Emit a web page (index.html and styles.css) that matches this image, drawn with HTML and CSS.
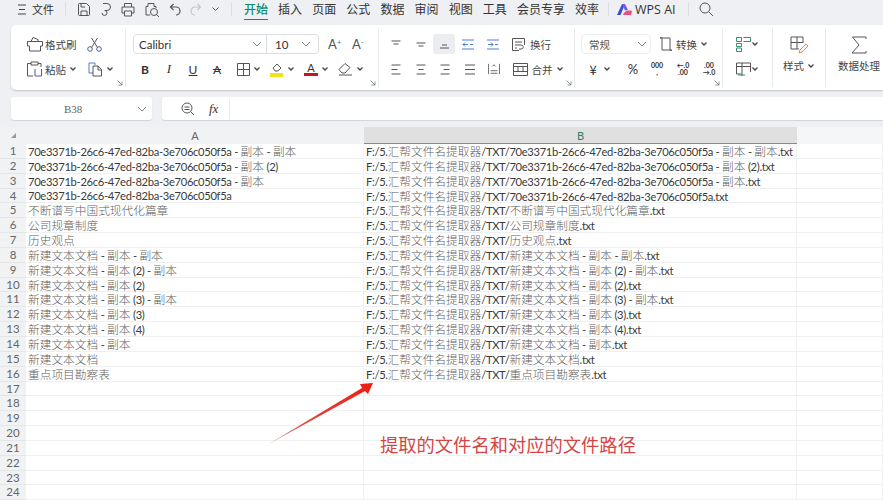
FILE: index.html
```html
<!DOCTYPE html>
<html lang="zh-CN">
<head>
  <meta charset="UTF-8" />
  <title>WPS 表格</title>
  <link rel="stylesheet" href="styles.css">
</head>
<body>
  <svg class="defs" width="0" height="0">
    <symbol id="caret" viewBox="0 0 8 8"><path d="M1.500 2.500 4 5l2.500-2.500" fill="none" stroke="#444" stroke-width="1.300"/></symbol>
    <symbol id="chev" viewBox="0 0 10 8"><path d="M1 2l4 4 4-4" fill="none" stroke="#888" stroke-width="1"/></symbol>
    <symbol id="launch" viewBox="0 0 6 6"><path d="M0.500 0.500 5 5M5 1.500V5H1.500" fill="none" stroke="#777" stroke-width=".8"/></symbol>
  </svg>

  <div class="titlebar">
    <svg class="menu-ic" width="8" height="11" viewBox="0 0 8 11"><path d="M0 1h8M1 5.500h6M0 10h8" stroke="#444" fill="none"/></svg>
    <span class="file-tab">文件</span>
    <span class="bar-sep"></span>
    <div class="quick">
      <svg width="14" height="15" viewBox="0 0 14 15"><path d="M1.500 2.500a1 1 0 0 1 1-1h7l3 3v8a1 1 0 0 1-1 1h-9a1 1 0 0 1-1-1zM4 13.500V9h6v4.500M4 1.500V5h4" fill="none" stroke="#555"/></svg>
      <svg width="12" height="15" viewBox="0 0 12 15"><path d="M3 1.500h4a3.500 3.500 0 0 1 0 7H4.500M5 8.500a2.500 2.500 0 1 1-3 2.500" fill="none" stroke="#555"/></svg>
      <svg width="14" height="15" viewBox="0 0 14 15"><path d="M3.500 5V1.500h7V5M1 5h12v6h-2.500M3.500 11H1V5M3.500 9h7v5h-7z" fill="none" stroke="#555"/></svg>
      <svg width="16" height="15" viewBox="0 0 16 15"><path d="M6 13H2V4.500h2V1.500h6V4.500h2V6" fill="none" stroke="#555"/><circle cx="10" cy="10" r="3.500" fill="none" stroke="#555"/><path d="M12.500 12.500 15 15" stroke="#555"/></svg>
      <svg width="12" height="13" viewBox="0 0 12 13"><path d="M4.500 1 1.500 4l3 3M1.500 4H7a3.500 3.500 0 0 1 0 8" fill="none" stroke="#555" stroke-width="1.200"/></svg>
      <svg width="12" height="13" viewBox="0 0 12 13"><path d="M7.500 1l3 3-3 3M10.500 4H5a3.500 3.500 0 0 0 0 8" fill="none" stroke="#c4c6c9" stroke-width="1.200"/></svg>
      <svg width="9" height="8" viewBox="0 0 8 8"><path d="M1 2.500 4 5.500l3-3" fill="none" stroke="#555"/></svg>
    </div>
    <span class="bar-sep tabs-sep"></span>
    <nav class="tabs">
      <a class="active">开始</a>
      <a>插入</a>
      <a>页面</a>
      <a>公式</a>
      <a>数据</a>
      <a>审阅</a>
      <a>视图</a>
      <a>工具</a>
      <a>会员专享</a>
      <a>效率</a>
    </nav>
    <span class="bar-sep ai-sep"></span>
    <div class="wps-ai">
      <svg width="15" height="12" viewBox="0 0 15 12"><path d="M0 12 5 1h3L3.500 12z" fill="#3a4fd8"/><path d="M5 1h3l3 6-3 .5z" fill="#7c5be0"/><path d="M6 12c1-3 4-5.500 9-4l-1 4z" fill="#ef4e7d"/></svg>
      <span>WPS AI</span>
    </div>
    <span class="bar-sep ai-sep2"></span>
    <svg class="search-ic" width="15" height="15" viewBox="0 0 15 15"><circle cx="6" cy="6" r="5" fill="none" stroke="#555"/><path d="M9.500 9.500 14 14" stroke="#555"/></svg>
  </div>

  <div class="ribbon">
    <section class="group g-clip">
      <div class="rib-row">
        <svg class="ic18" width="18" height="16" viewBox="0 0 18 16"><path d="M1.500 5.500h15V10h-2v5h-11v-5h-2zM5 5.500 7 1.500l5 2M12 5.500V3.500" fill="none" stroke="#555"/></svg>
        <span class="lbl">格式刷</span>
        <svg class="scissor" width="15" height="15" viewBox="0 0 15 15"><circle cx="3" cy="12" r="2.300" fill="none" stroke="#4a5f9d"/><circle cx="12" cy="12" r="2.300" fill="none" stroke="#4a5f9d"/><path d="M4.500 10.500 10.500 1M10.500 10.500 4.500 1" fill="none" stroke="#555"/></svg>
      </div>
      <div class="rib-row">
        <svg class="ic18" width="18" height="16" viewBox="0 0 18 16"><path d="M5 2.500H1.500V15H7M12 2.500h3V6M5 1h7v3H5z" fill="none" stroke="#555"/><path d="M9 8v7h6.500V8" fill="none" stroke="#4a5f9d"/></svg>
        <span class="lbl">粘贴</span>
        <svg class="caret" width="8" height="8"><use href="#caret"/></svg>
        <svg class="copy-ic" width="15" height="15" viewBox="0 0 15 15"><path d="M5 11H1V1h6v2" fill="none" stroke="#4a7fd0"/><path d="M5 4h5l3.500 3.500V14H5zM10 4v4h3.500" fill="none" stroke="#555"/></svg>
        <svg class="caret" width="8" height="8"><use href="#caret"/></svg>
      </div>
      <svg class="launcher" width="6" height="6"><use href="#launch"/></svg>
    </section>

    <section class="group g-font">
      <div class="rib-row">
        <div class="font-box">
          <span class="font-name">Calibri</span>
          <svg width="10" height="8"><use href="#chev"/></svg>
          <span class="font-size">10</span>
          <svg width="10" height="8"><use href="#chev"/></svg>
        </div>
        <span class="grow-a">A<sup>+</sup></span>
        <span class="grow-a">A<sup>-</sup></span>
      </div>
      <div class="rib-row fmt-row">
        <b class="fmt">B</b>
        <i class="fmt serif">I</i>
        <u class="fmt">U</u>
        <s class="fmt">A</s>
        <svg class="border-ic" width="13" height="13" viewBox="0 0 13 13"><path d="M.5.500h12v12H.500zM6.500.500v12M.5 6.500h12" fill="none" stroke="#555"/></svg>
        <svg class="caret" width="8" height="8"><use href="#caret"/></svg>
        <svg class="fill-ic" width="14" height="15" viewBox="0 0 14 15"><path d="M3 6l4-4 4 4-3 3H5z" fill="none" stroke="#555"/><rect y="11" width="13" height="4" fill="#f2e21a"/></svg>
        <svg class="caret" width="8" height="8"><use href="#caret"/></svg>
        <span class="color-a">A</span>
        <svg class="caret" width="8" height="8"><use href="#caret"/></svg>
        <svg class="erase-ic" width="15" height="14" viewBox="0 0 15 14"><path d="M1 7.500 7 1.500l5 4-5 5.500H4zM1 13h13" fill="none" stroke="#555"/></svg>
        <svg class="caret" width="8" height="8"><use href="#caret"/></svg>
      </div>
      <svg class="launcher" width="6" height="6"><use href="#launch"/></svg>
    </section>

    <section class="group g-align">
      <div class="rib-row">
        <svg class="al" width="11" height="11" viewBox="0 0 11 11"><path d="M1 2h9M3 5h5" stroke="#555" fill="none"/></svg>
        <svg class="al" width="11" height="11" viewBox="0 0 11 11"><path d="M1 4h9M3 7h5" stroke="#555" fill="none"/></svg>
        <span class="al-on"><svg width="11" height="11" viewBox="0 0 11 11"><path d="M3 6h5M1 9h9" stroke="#555" fill="none"/></svg></span>
        <svg class="al" width="12" height="11" viewBox="0 0 12 11"><path d="M0 1h12M0 10h12M6 5.500H1M3 3.500l-2 2 2 2M8 5.500h3" stroke="#4a7fd0" fill="none"/></svg>
        <svg class="al" width="12" height="11" viewBox="0 0 12 11"><path d="M0 1h12M0 10h12M1 5.500h5M4 3.500l2 2-2 2M8 5.500h3" stroke="#4a7fd0" fill="none"/></svg>
        <svg class="wrap-ic" width="15" height="15" viewBox="0 0 15 15"><path d="M13.500 8V1.500h-12v12H8M4 5h7M4 8h6c3 0 3 4 0 4H8M4 11h2" fill="none" stroke="#555"/></svg>
        <span class="lbl">换行</span>
      </div>
      <div class="rib-row">
        <svg class="al" width="11" height="11" viewBox="0 0 11 11"><path d="M1 1h9M1 5.500h6M1 10h9" stroke="#555" fill="none"/></svg>
        <svg class="al" width="11" height="11" viewBox="0 0 11 11"><path d="M1 1h9M3 5.500h5M1 10h9" stroke="#555" fill="none"/></svg>
        <svg class="al" width="11" height="11" viewBox="0 0 11 11"><path d="M1 1h9M4 5.500h6M1 10h9" stroke="#555" fill="none"/></svg>
        <svg class="al" width="12" height="11" viewBox="0 0 12 11"><path d="M1 1h10M1 5.500h10M1 10h10" stroke="#555" fill="none"/></svg>
        <svg class="al" width="12" height="12" viewBox="0 0 14 12"><path d="M.5 0v12M13.500 0v12M3 11h8M3 8h8M5 3l2-2 2 2" stroke="#555" fill="none"/></svg>
        <svg class="wrap-ic" width="15" height="13" viewBox="0 0 15 13"><path d="M.5.500h14v12H.500zM.5 3.500h14M.5 8.500h14M5 3.500v5M10 3.500v5" fill="none" stroke="#555"/></svg>
        <span class="lbl">合并</span>
        <svg class="caret" width="8" height="8"><use href="#caret"/></svg>
      </div>
      <svg class="launcher" width="6" height="6"><use href="#launch"/></svg>
    </section>

    <section class="group g-num">
      <div class="rib-row">
        <div class="num-box"><span>常规</span><svg width="10" height="8"><use href="#chev"/></svg></div>
        <svg class="convert-ic" width="14" height="14" viewBox="0 0 14 14"><path d="M3 1v12h10M11 13V1H1M1 1l2-1M11 13l2 1" fill="none" stroke="#555"/></svg>
        <span class="lbl">转换</span>
        <svg class="caret" width="8" height="8"><use href="#caret"/></svg>
      </div>
      <div class="rib-row num-row">
        <span class="yen">¥</span>
        <svg class="caret" width="8" height="8"><use href="#caret"/></svg>
        <span class="pct">%</span>
        <span class="dec">000<br>,</span>
        <span class="dec">←.0<br>.00</span>
        <span class="dec">.00<br>→.0</span>
      </div>
      <svg class="launcher" width="6" height="6"><use href="#launch"/></svg>
    </section>

    <section class="group g-cond">
      <div class="rib-row">
        <svg width="15" height="15" viewBox="0 0 15 15"><path d="M.5.500h5v4h-5zM7.500.500h7v4h-7M.5 6.500h5v3h-5zM.5 11h5v3.500h-5z" fill="none" stroke="#3c8f6b"/></svg>
        <svg class="caret" width="8" height="8"><use href="#caret"/></svg>
      </div>
      <div class="rib-row">
        <svg width="15" height="15" viewBox="0 0 15 15"><path d="M.5 1h14v9M.5 1v11h5M.5 4.500h14M6 1v13" fill="none" stroke="#555"/><path d="M2 13h7" stroke="#3c8f6b"/></svg>
        <svg class="caret" width="8" height="8"><use href="#caret"/></svg>
      </div>
    </section>

    <section class="group g-big g-style">
      <svg width="19" height="18" viewBox="0 0 19 18"><path d="M9 13H1V1h12v6M1 6.500h12M7 1v12" fill="none" stroke="#555"/><path d="M9 17l1-3 6-6 2 2-6 6z" fill="none" stroke="#d98a4b"/></svg>
      <div class="big-lbl"><span>样式</span><svg class="caret" width="8" height="8"><use href="#caret"/></svg></div>
    </section>

    <section class="group g-big g-data">
      <svg width="16" height="18" viewBox="0 0 16 18"><path d="M15 3V1H1.500L8 9l-7 8h14v-2" fill="none" stroke="#555"/></svg>
      <div class="big-lbl"><span>数据处理</span></div>
    </section>
  </div>

  <div class="formula-row">
    <div class="name-box">
      <span>B38</span>
      <svg width="10" height="8"><use href="#chev"/></svg>
    </div>
    <div class="formula-box">
      <svg class="zoom-ic" width="13" height="13" viewBox="0 0 13 13"><circle cx="6" cy="6" r="5" fill="none" stroke="#555"/><path d="M9.500 9.500 13 13M3.500 5h5M3.500 7.500h5" stroke="#555" fill="none"/></svg>
      <span class="fx">fx</span>
    </div>
  </div>

  <div class="sheet">
    <div class="col-head">
      <span class="corner"></span>
      <span class="col-a">A</span>
      <span class="col-b">B</span>
      <span class="col-c"></span>
    </div>
    <div class="row"><span class="num">1</span><span class="a">70e3371b-26c6-47ed-82ba-3e706c050f5a - <em>副本</em> - <em>副本</em></span><span class="b">F:/5.<em>汇帮文件名提取器</em>/TXT/70e3371b-26c6-47ed-82ba-3e706c050f5a - <em>副本</em> - <em>副本</em>.txt</span><span class="c"></span></div>
    <div class="row"><span class="num">2</span><span class="a">70e3371b-26c6-47ed-82ba-3e706c050f5a - <em>副本</em> (2)</span><span class="b">F:/5.<em>汇帮文件名提取器</em>/TXT/70e3371b-26c6-47ed-82ba-3e706c050f5a - <em>副本</em> (2).txt</span><span class="c"></span></div>
    <div class="row"><span class="num">3</span><span class="a">70e3371b-26c6-47ed-82ba-3e706c050f5a - <em>副本</em></span><span class="b">F:/5.<em>汇帮文件名提取器</em>/TXT/70e3371b-26c6-47ed-82ba-3e706c050f5a - <em>副本</em>.txt</span><span class="c"></span></div>
    <div class="row"><span class="num">4</span><span class="a">70e3371b-26c6-47ed-82ba-3e706c050f5a</span><span class="b">F:/5.<em>汇帮文件名提取器</em>/TXT/70e3371b-26c6-47ed-82ba-3e706c050f5a.txt</span><span class="c"></span></div>
    <div class="row"><span class="num">5</span><span class="a"><em>不断谱写中国式现代化篇章</em></span><span class="b">F:/5.<em>汇帮文件名提取器</em>/TXT/<em>不断谱写中国式现代化篇章</em>.txt</span><span class="c"></span></div>
    <div class="row"><span class="num">6</span><span class="a"><em>公司规章制度</em></span><span class="b">F:/5.<em>汇帮文件名提取器</em>/TXT/<em>公司规章制度</em>.txt</span><span class="c"></span></div>
    <div class="row"><span class="num">7</span><span class="a"><em>历史观点</em></span><span class="b">F:/5.<em>汇帮文件名提取器</em>/TXT/<em>历史观点</em>.txt</span><span class="c"></span></div>
    <div class="row"><span class="num">8</span><span class="a"><em>新建文本文档</em> - <em>副本</em> - <em>副本</em></span><span class="b">F:/5.<em>汇帮文件名提取器</em>/TXT/<em>新建文本文档</em> - <em>副本</em> - <em>副本</em>.txt</span><span class="c"></span></div>
    <div class="row"><span class="num">9</span><span class="a"><em>新建文本文档</em> - <em>副本</em> (2) - <em>副本</em></span><span class="b">F:/5.<em>汇帮文件名提取器</em>/TXT/<em>新建文本文档</em> - <em>副本</em> (2) - <em>副本</em>.txt</span><span class="c"></span></div>
    <div class="row"><span class="num">10</span><span class="a"><em>新建文本文档</em> - <em>副本</em> (2)</span><span class="b">F:/5.<em>汇帮文件名提取器</em>/TXT/<em>新建文本文档</em> - <em>副本</em> (2).txt</span><span class="c"></span></div>
    <div class="row"><span class="num">11</span><span class="a"><em>新建文本文档</em> - <em>副本</em> (3) - <em>副本</em></span><span class="b">F:/5.<em>汇帮文件名提取器</em>/TXT/<em>新建文本文档</em> - <em>副本</em> (3) - <em>副本</em>.txt</span><span class="c"></span></div>
    <div class="row"><span class="num">12</span><span class="a"><em>新建文本文档</em> - <em>副本</em> (3)</span><span class="b">F:/5.<em>汇帮文件名提取器</em>/TXT/<em>新建文本文档</em> - <em>副本</em> (3).txt</span><span class="c"></span></div>
    <div class="row"><span class="num">13</span><span class="a"><em>新建文本文档</em> - <em>副本</em> (4)</span><span class="b">F:/5.<em>汇帮文件名提取器</em>/TXT/<em>新建文本文档</em> - <em>副本</em> (4).txt</span><span class="c"></span></div>
    <div class="row"><span class="num">14</span><span class="a"><em>新建文本文档</em> - <em>副本</em></span><span class="b">F:/5.<em>汇帮文件名提取器</em>/TXT/<em>新建文本文档</em> - <em>副本</em>.txt</span><span class="c"></span></div>
    <div class="row"><span class="num">15</span><span class="a"><em>新建文本文档</em></span><span class="b">F:/5.<em>汇帮文件名提取器</em>/TXT/<em>新建文本文档</em>.txt</span><span class="c"></span></div>
    <div class="row"><span class="num">16</span><span class="a"><em>重点项目勘察表</em></span><span class="b">F:/5.<em>汇帮文件名提取器</em>/TXT/<em>重点项目勘察表</em>.txt</span><span class="c"></span></div>
    <div class="row"><span class="num">17</span><span class="a"></span><span class="b"></span><span class="c"></span></div>
    <div class="row"><span class="num">18</span><span class="a"></span><span class="b"></span><span class="c"></span></div>
    <div class="row"><span class="num">19</span><span class="a"></span><span class="b"></span><span class="c"></span></div>
    <div class="row"><span class="num">20</span><span class="a"></span><span class="b"></span><span class="c"></span></div>
    <div class="row"><span class="num">21</span><span class="a"></span><span class="b"></span><span class="c"></span></div>
    <div class="row"><span class="num">22</span><span class="a"></span><span class="b"></span><span class="c"></span></div>
    <div class="row"><span class="num">23</span><span class="a"></span><span class="b"></span><span class="c"></span></div>
    <div class="row"><span class="num">24</span><span class="a"></span><span class="b"></span><span class="c"></span></div>

    <svg class="arrow" width="108" height="66" viewBox="0 0 108 66">
      <defs>
        <linearGradient id="arrowFade" x1="0" y1="1" x2="1" y2="0">
          <stop offset="0" stop-color="#c9a0a0"/>
          <stop offset=".35" stop-color="#e2453c"/>
          <stop offset="1" stop-color="#ee1c14"/>
        </linearGradient>
      </defs>
      <path d="M1 64 96 7 94 3 107 2 102 13 99 10z" fill="url(#arrowFade)"/>
    </svg>
    <div class="callout">提取的文件名和对应的文件路径</div>
  </div>
</body>
</html>
```

FILE: styles.css
```css
* { box-sizing: border-box; }
html, body { height: 100%; }
body {
  margin: 0;
  height: 500px;
  overflow: hidden;
  background: #eef0f3;
  color: #333;
  font-family: "Noto Sans CJK SC", "Liberation Sans", sans-serif;
  font-size: 12px;
}
.defs { position: absolute; }
svg { flex: none; display: block; }

/* top bar */
.titlebar {
  height: 25px;
  display: flex;
  align-items: center;
  padding-left: 18px;
  padding-bottom: 7px;
}
.file-tab { margin-left: 6px; font-size: 11px; }
.bar-sep { width: 1px; height: 14px; background: #dcdfe3; margin-left: 11px; }
.quick { display: flex; align-items: center; gap: 9px; margin-left: 11px; width: 165px; }
.tabs-sep { margin-left: -11px; }
.tabs { display: flex; gap: 10.100px; margin-left: 12px; }
.tabs a { font-size: 12px; line-height: 16px; white-space: nowrap; position: relative; }
.tabs a.active { color: #0f8a6a; font-weight: 500; }
.tabs a.active::after {
  content: "";
  position: absolute;
  left: 0;
  right: 0;
  bottom: -3px;
  height: 1.500px;
  background: #0f8a6a;
}
.ai-sep { margin-left: 9px; }
.wps-ai { display: flex; align-items: center; gap: 3px; margin-left: 8px; font-family: "Open Sans", sans-serif; font-size: 12.500px; }
.ai-sep2 { margin-left: 12px; }
.search-ic { margin-left: 10px; }

/* ribbon */
.ribbon {
  margin-left: 11px;
  height: 65px;
  background: #fff;
  border-radius: 5px 0 0 5px;
  box-shadow: 0 1px 2px rgba(0, 0, 0, 0.18);
  display: flex;
  overflow: hidden;
}
.group {
  position: relative;
  flex: none;
  display: flex;
  flex-direction: column;
  gap: 5px;
  border-right: 1px solid #e8eaec;
  margin: 3px 0;
  padding-top: 6px;
}
.rib-row { height: 20px; display: flex; align-items: center; }
.lbl { font-size: 10.500px; color: #444; white-space: nowrap; }
.launcher { position: absolute; right: 2px; bottom: 1px; }
.caret { margin-left: 3px; }

.g-clip { width: 115px; padding-left: 15px; }
.ic18 { margin-right: 1px; }
.scissor { margin-left: 10px; }
.copy-ic { margin-left: 11px; }

.g-font { width: 253px; padding-left: 7px; }
.font-box {
  width: 186px;
  height: 20px;
  border: 1px solid #dcdfe2;
  border-radius: 4px;
  display: flex;
  align-items: center;
  font-family: Lato, sans-serif;
  font-size: 11.500px;
}
.font-name { width: 118px; padding-left: 5px; }
.font-size { width: 35px; margin-left: 4px; padding-left: 8px; border-left: 1px solid #dcdfe2; line-height: 19px; }
.grow-a { margin-left: 9px; width: 15px; font-family: Lato, sans-serif; font-size: 13px; color: #555; }
.grow-a sup { font-size: 8px; line-height: 0; vertical-align: 4px; color: #3c7fb0; }
.fmt-row .fmt { width: 24px; text-align: center; font-family: Lato, sans-serif; font-size: 12px; }
.fmt.serif { font-family: "Liberation Serif", serif; font-size: 13px; }
.border-ic { margin-left: 8px; }
.fill-ic { margin-left: 9px; }
.color-a {
  margin-left: 9px;
  width: 14px;
  text-align: center;
  font-family: Lato, sans-serif;
  line-height: 11px;
  font-size: 11px;
  border-bottom: 3px solid #c8141c;
}
.erase-ic { margin-left: 9px; }

.g-align { width: 196px; padding-left: 5px; }
.g-align .al { width: 12px; margin: 0 6.500px 0 6px; }
.al-on {
  width: 22px;
  height: 20px;
  margin: 0 1px 0 0;
  background: #ebedf0;
  border-radius: 3px;
  display: flex;
  align-items: center;
  justify-content: center;
}
.wrap-ic { margin: 0 4px 0 6px; }

.g-num { width: 148px; padding-left: 6px; }
.num-box {
  width: 70px;
  height: 20px;
  border: 1px solid #eceef0;
  border-radius: 4px;
  display: flex;
  align-items: center;
  justify-content: space-between;
  padding: 0 3px 0 7px;
  font-size: 10.500px;
  color: #555;
}
.convert-ic { margin: 0 3px 0 8px; }
.num-row { padding-left: 5px; }
.yen { font-size: 13px; width: 14px; text-align: center; }
.pct { margin-left: 12px; font-family: Lato, sans-serif; font-size: 13px; width: 20px; text-align: center; }
.dec {
  width: 24px;
  margin-left: 2px;
  text-align: center;
  font-family: Lato, sans-serif;
  font-size: 7px;
  line-height: 7px;
  font-weight: 700;
}

.g-cond { width: 50px; padding-left: 13px; }
.g-cond .caret { margin-left: 0; }
.g-big { align-items: center; gap: 4px; }
.g-style { width: 53px; padding-top: 8px; }
.big-lbl { display: flex; align-items: center; font-size: 10.500px; color: #444; white-space: nowrap; }
.g-data { width: 62px; border-right: none; padding-top: 8px; padding-left: 4px; }

/* formula bar */
.formula-row { display: flex; gap: 10px; margin: 7px 0 0 11px; height: 23px; }
.name-box, .formula-box { background: #fff; box-shadow: 0 1px 1px rgba(0, 0, 0, 0.12); display: flex; align-items: center; }
.name-box {
  width: 141px;
  border-radius: 3px;
  padding: 0 5px 0 53px;
  justify-content: space-between;
  font-family: "Liberation Serif", serif;
  font-size: 11px;
  color: #666;
}
.formula-box { flex: 1; border-radius: 3px 0 0 3px; }
.zoom-ic { margin-left: 19px; }
.fx {
  margin-left: 15px;
  padding-right: 11px;
  border-right: 1px solid #e8eaec;
  font-family: "Liberation Serif", serif;
  font-style: italic;
  font-size: 13px;
  line-height: 20px;
}

/* sheet */
.sheet {
  position: relative;
  margin-top: 7px;
  background: #fff;
  font-family: Lato, sans-serif;
  font-size: 11.200px;
  letter-spacing: -0.320px;
  color: #3a3a3a;
}
.col-head { display: flex; height: 17px; background: #f1f2f3; line-height: 17px; font-size: 11px; letter-spacing: 0; color: #666; text-align: center; }
.corner { width: 26px; position: relative; }
.corner::after {
  content: "";
  position: absolute;
  left: 11px;
  top: 6px;
  border-style: solid;
  border-width: 0 0 5px 5px;
  border-color: transparent transparent #999 transparent;
}
.col-a { width: 338px; }
.col-b { width: 433px; background: #e0e0e0; border-bottom: 1.500px solid #5f9f8a; color: #2f7d66; }
.col-c { flex: 1; background: #f5f6f7; }
.row { display: flex; height: 14.850px; line-height: 14.850px; white-space: nowrap; }
.num { width: 26px; flex: none; background: #f1f2f3; text-align: center; font-size: 11.500px; letter-spacing: 0; color: #666; border-bottom: 1px solid #e4e6e8; }
.a, .b, .c { border-bottom: 1px solid #eef0f1; border-right: 1px solid #eef0f1; padding-left: 2px; }
.a { width: 338px; }
.b { width: 433px; }
.c { flex: 1; }
.row em {
  display: inline-block;
  font-family: "Noto Sans CJK SC", sans-serif;
  font-style: normal;
  font-size: 11.700px;
  line-height: 13px;
  letter-spacing: 0;
  font-weight: 300;
  color: #5f5f5f;
}

.arrow { position: absolute; left: 266px; top: 254px; }
.callout {
  position: absolute;
  left: 380px;
  top: 304px;
  font-family: "Noto Sans CJK SC", sans-serif;
  font-size: 18.300px;
  letter-spacing: 0;
  line-height: 26px;
  color: #d64545;
  white-space: nowrap;
}
```
